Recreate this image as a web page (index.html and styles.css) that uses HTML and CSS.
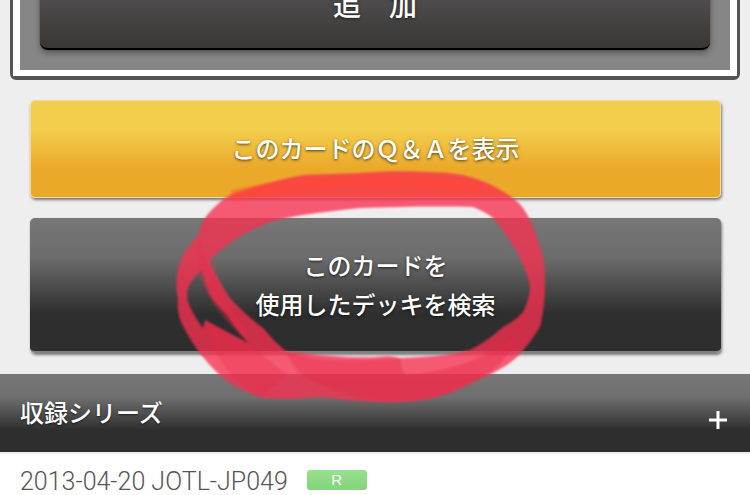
FILE: index.html
```html
<!DOCTYPE html>
<html lang="ja">
<head>
    <meta charset="UTF-8">
    <title>カード詳細</title>
    <link rel="stylesheet" href="styles.css">
</head>
<body>
    <div class="add-box">
        <div class="add-box-inner">
            <button class="btn-add">追　加</button>
        </div>
    </div>

    <div class="actions">
        <a class="btn btn-orange">このカードのＱ＆Ａを表示</a>
        <a class="btn btn-gray">このカードを<br>使用したデッキを検索</a>
    </div>

    <!-- Series section -->
    <div class="section-head">
        <span class="section-title">収録シリーズ</span>
        <svg class="plus" width="18" height="18" viewBox="0 0 18 18">
            <path d="M0 9H18M9 0V18" stroke="#fff" stroke-width="3"/>
        </svg>
    </div>
    <div class="series-row">
        <span class="series-text">2013-04-20 JOTL-JP049</span>
        <span class="rarity">R</span>
    </div>

    <!-- Hand drawn marker circle on top of the screenshot -->
    <svg class="scribble" width="750" height="495" viewBox="0 0 750 495">
        <g class="scribble-soft">
            <path fill="#f8304f" fill-rule="evenodd" opacity=".78" d="M360 173C385 171 410 171 427 172C440 172 452 173 463 175C475 178 487 182 497 188C508 194 517 200 523 208C530 218 534 228 537 238C542 250 545 262 545 275C545 295 544 312 540 327C533 338 526 348 517 357C505 368 488 376 470 383C455 392 440 397 423 400C408 402 392 403 377 402C357 401 338 399 320 397C300 399 281 400 263 398C250 394 240 389 230 383C220 376 211 367 203 357C194 346 186 333 180 320C178 312 177 305 178 298C176 290 176 282 177 275C178 267 180 261 183 255C187 249 192 242 198 235C200 228 203 221 207 215C214 207 221 200 230 195C255 186 280 179 303 175C322 174 341 174 360 173Z
            M210 260C218 252 227 245 237 238C247 232 258 227 270 222C280 219 291 217 303 215C322 212 341 210 360 208C397 207 435 206 473 207C480 210 487 213 493 218C502 228 510 240 517 252C522 262 527 273 530 285C530 295 527 304 523 312C518 318 511 323 503 327C493 336 482 344 470 350C450 355 430 357 400 358C392 356 385 356 377 357C352 358 327 356 303 353C297 352 292 352 287 352C279 346 271 337 263 328C251 319 240 309 230 298C222 286 215 273 210 260Z
            M202 270C196 275 191 281 188 288C187 293 187 298 188 302C192 312 197 320 203 328L205 320L248 343C240 334 233 325 227 315C220 308 214 302 210 295C207 287 204 279 202 270Z"/>
            <path fill="none" stroke="#ff4535" stroke-width="11" opacity=".45" d="M232 196C290 181 400 177 480 188"/>
            <path fill="#e42a48" opacity=".4" d="M287 352C320 362 360 362 400 358L404 375C450 372 490 358 522 330C510 365 470 392 423 399C380 404 340 396 310 380C295 372 290 362 287 352Z"/>
            <path fill="#e42a48" opacity=".3" d="M205 320L248 343L287 375L262 397C235 388 212 355 205 320Z"/>
            <path fill="#e42a48" opacity=".35" d="M198 235C205 265 222 300 248 330L250 342C225 325 205 295 198 270Z"/>
        </g>
    </svg>
</body>
</html>
```

FILE: styles.css
```css
body {
    margin: 0;
    height: 495px;
    overflow: hidden;
    position: relative;
    background-color: #eee;
    font-family: "Noto Sans CJK JP", "Liberation Sans", sans-serif;
    color: #fff;
}

.add-box {
    margin: -70px 10px 20px 10px;
    border: 3px solid #555;
    border-bottom-width: 4px;
    border-radius: 6px;
}

.add-box-inner {
    border: 7px solid #fff;
    border-bottom-width: 6px;
    background-color: #868686;
    padding: 20px 20px 20px 20px;
}

.btn-add {
    display: block;
    width: 100%;
    height: 90px;
    padding: 0;
    border: none;
    border-bottom: 2px solid #000;
    border-radius: 8px;
    background: linear-gradient(#5c5c5c, #3a3636);
    box-shadow: 0 0 1px #000, 0 3px 6px rgba(0, 0, 0, 0.35);
    color: #fff;
    font-family: inherit;
    font-size: 28px;
    font-weight: 500;
    text-shadow: 0 1px 3px rgba(0, 0, 0, 0.6);
}

.actions {
    display: flex;
    flex-direction: column;
    gap: 20px;
    margin: 0 29px 21px 30px;
}

.btn {
    display: flex;
    align-items: center;
    justify-content: center;
    border-radius: 5px;
    text-align: center;
    font-size: 24px;
    font-weight: 500;
    line-height: 39px;
    text-shadow: 0 1px 3px rgba(0, 0, 0, 0.7);
    box-shadow: 1px 2px 3px rgba(0, 0, 0, 0.5);
}

.btn-orange {
    height: 92px;
    padding-bottom: 4px;
    border: 1px solid #f3d9a0;
    background: linear-gradient(#f3cd4c 0%, #f3cd4c 30%, #eba92a 70%, #eba92a 100%);
}

.btn-gray {
    height: 131px;
    padding-bottom: 2px;
    border-bottom: 2px solid #808080;
    background: linear-gradient(#777 0%, #6c6c6c 30%, #2e2e2e 72%, #2e2e2e 100%);
}

.section-head {
    display: flex;
    align-items: flex-end;
    justify-content: space-between;
    height: 78px;
    padding: 0 23px 0 20px;
    box-sizing: border-box;
    background: linear-gradient(#777 0%, #6e6e6e 30%, #2e2e2e 72%, #2e2e2e 100%);
}

.section-title {
    margin-bottom: 23px;
    font-size: 24px;
    font-weight: 500;
    line-height: 34px;
    text-shadow: 0 1px 2px rgba(0, 0, 0, 0.6);
}

.plus {
    margin-bottom: 23px;
}

.series-row {
    display: flex;
    align-items: center;
    gap: 19px;
    height: 41px;
    box-sizing: border-box;
    margin-top: 2px;
    padding: 11px 20px 0 20px;
    background-color: #fff;
    box-shadow: 0 -2px 0 #eee;
}

.series-text {
    margin-top: 2px;
    font-family: Roboto, "Liberation Sans", sans-serif;
    font-size: 25px;
    font-weight: 300;
    color: #555;
}

.rarity {
    width: 60px;
    height: 20px;
    border-radius: 3px;
    background: linear-gradient(#97e08f, #82d47c);
    text-align: center;
    font-family: "Liberation Sans", sans-serif;
    font-size: 15px;
    line-height: 20px;
}

.scribble {
    position: absolute;
    left: 0;
    top: 0;
}

.scribble-soft {
    filter: blur(1px);
}
```
